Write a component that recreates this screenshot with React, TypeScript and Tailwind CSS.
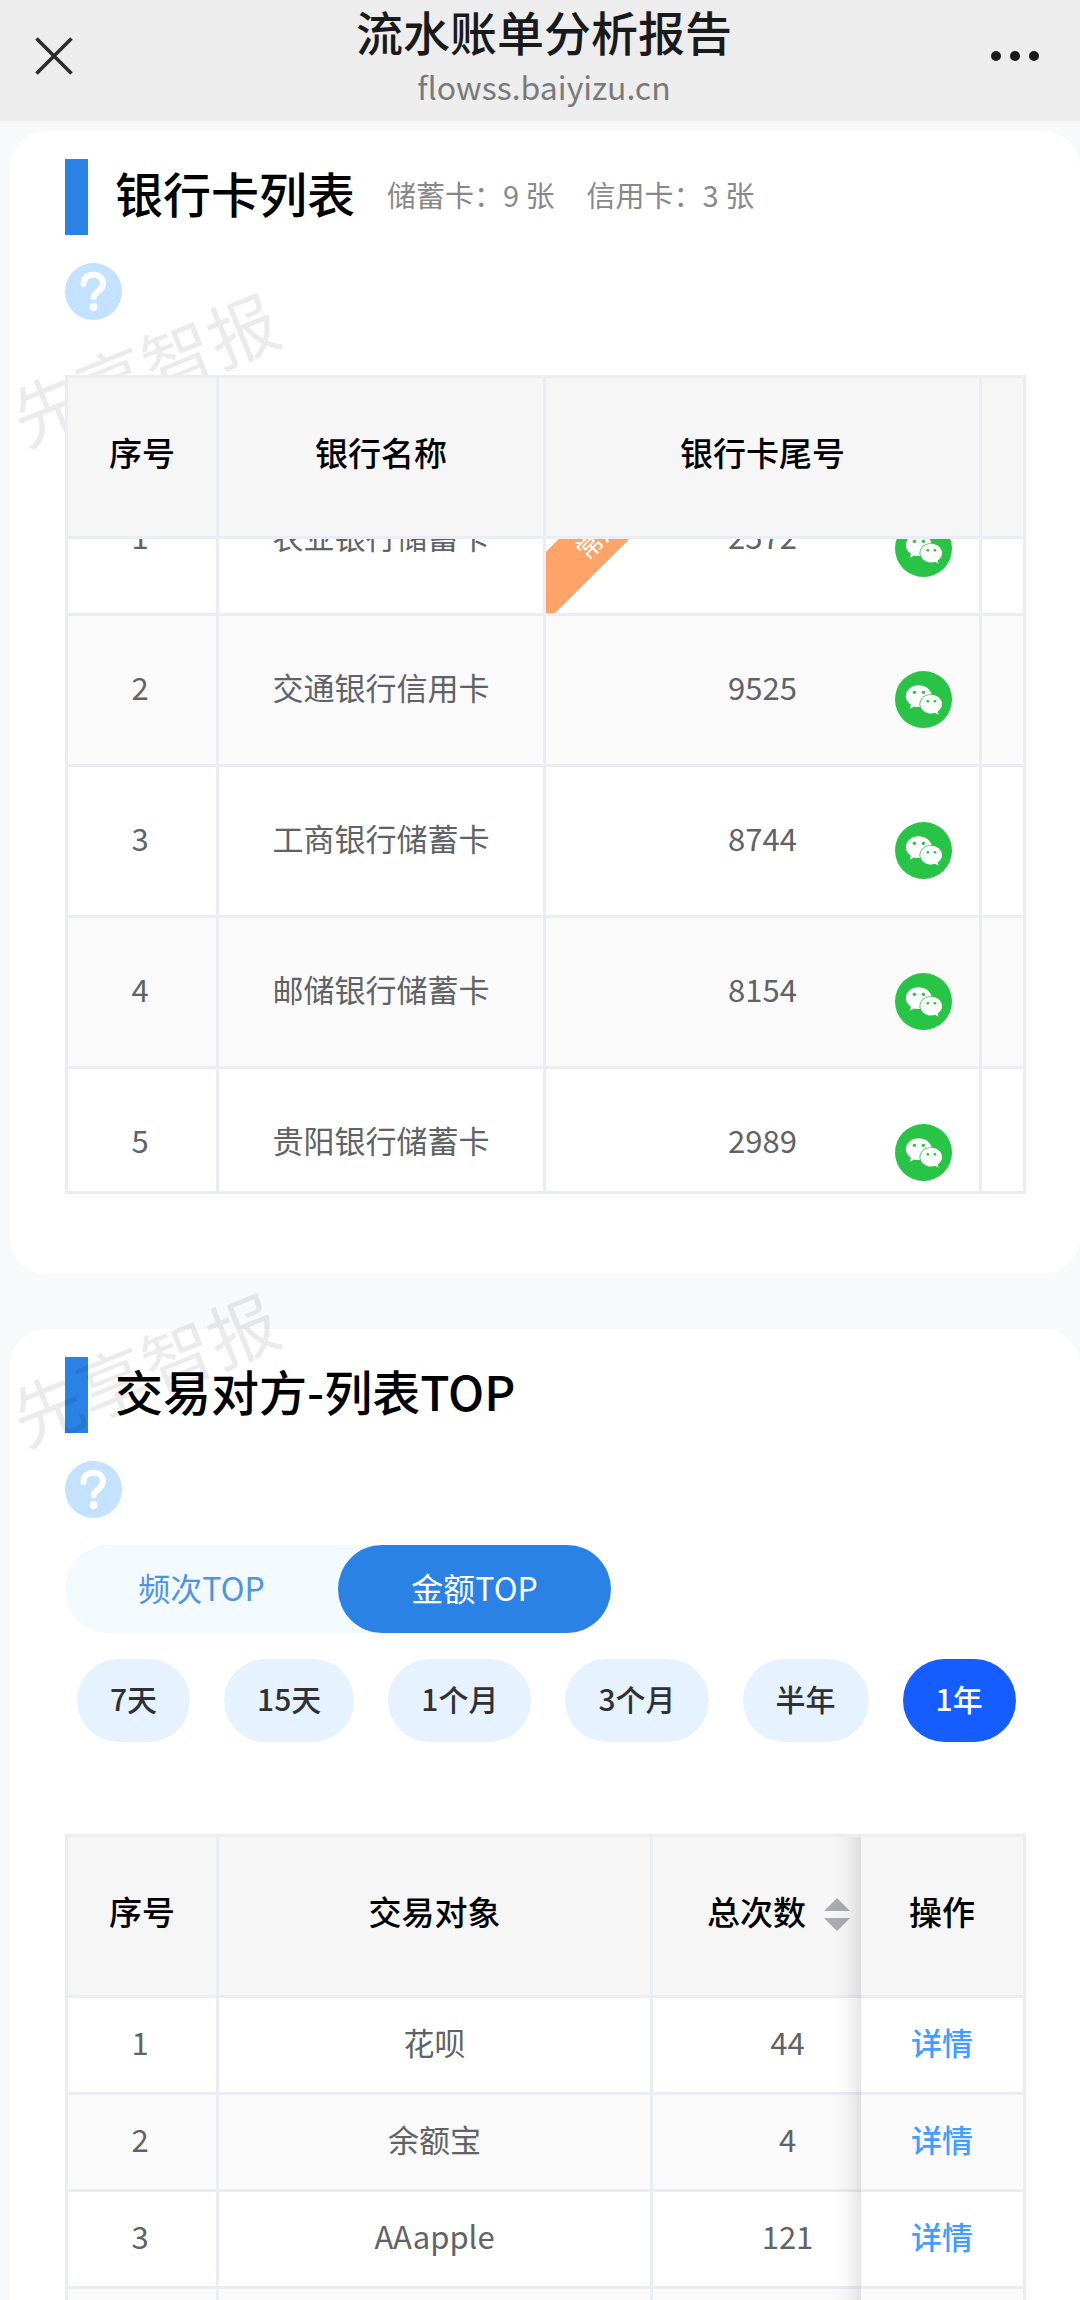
import * as React from "react";
import { FaWeixin } from "react-icons/fa";
import clsx from "clsx";

type BankCard = { name: string; tail: string; common?: boolean };

const bankCards: BankCard[] = [
  { name: "农业银行储蓄卡", tail: "2572", common: true },
  { name: "交通银行信用卡", tail: "9525" },
  { name: "工商银行储蓄卡", tail: "8744" },
  { name: "邮储银行储蓄卡", tail: "8154" },
  { name: "贵阳银行储蓄卡", tail: "2989" },
];

const counterparties = [
  { name: "花呗", count: "44" },
  { name: "余额宝", count: "4" },
  { name: "AAapple", count: "121" },
];

const ranges = ["7天", "15天", "1个月", "3个月", "半年", "1年"];

const th =
  "h-[161px] border-r-[3px] border-b-[3px] border-[#ebedf5] bg-[#f6f6f6] pb-2 text-[33px] font-medium text-black";
const td = "border-r-[3px] border-b-[3px] border-[#ebedf5] pb-1.5 text-center text-[31px] text-[#606266]";
const stickyCol =
  "sticky right-0 before:pointer-events-none before:absolute before:top-0 before:-bottom-[3px] before:-left-7 before:w-7 before:shadow-[inset_-28px_0_28px_-28px_rgba(0,0,0,0.2)]";

function TitleBar() {
  return (
    <header className="flex h-[121px] shrink-0 items-center justify-between bg-[#ededed] pr-[41px] pb-2.5 pl-[35px]">
      <button type="button" aria-label="关闭" className="w-[62px]">
        <svg viewBox="0 0 38 38" className="h-[38px] w-[38px]" fill="none" stroke="#2b2b2b" strokeWidth="3.6">
          <path d="M1.5 1.5 36.5 36.5M36.5 1.5 1.5 36.5" />
        </svg>
      </button>
      <div className="text-center">
        <h1 className="text-[47px] leading-[60px] font-medium text-[#1a1a1a]">流水账单分析报告</h1>
        <p className="text-[32px] leading-[50px] text-[#7a7a7a]">flowss.baiyizu.cn</p>
      </div>
      <button type="button" aria-label="更多" className="flex w-[48px] items-center justify-between">
        <span className="h-2.5 w-2.5 rounded-full bg-[#1a1a1a]" />
        <span className="h-2.5 w-2.5 rounded-full bg-[#1a1a1a]" />
        <span className="h-2.5 w-2.5 rounded-full bg-[#1a1a1a]" />
      </button>
    </header>
  );
}

function SectionTitle({ title, children }: { title: string; children?: React.ReactNode }) {
  return (
    <div className="flex h-[76px] items-center">
      <span className="h-full w-[23px] bg-[#2a82e4]" />
      <h2 className="ml-[27px] pb-2.5 text-[48px] font-medium text-black">{title}</h2>
      {children}
    </div>
  );
}

function HelpButton() {
  return (
    <button type="button" aria-label="说明" className="mt-7 block">
      <svg viewBox="0 0 57 57" className="h-[57px] w-[57px]" fill="none">
        <circle cx="28.5" cy="28.5" r="28.5" fill="#c2e2ff" />
        <path
          d="M18.500 21c0-6 4.200-9.300 9.800-9.300S38 15 38 20.500c0 4-2.200 5.800-4.900 7.800-2.900 2.200-4.300 3.400-4.300 6"
          stroke="#fff"
          strokeWidth="6"
          strokeLinecap="round"
        />
        <circle cx="28.5" cy="44" r="4" fill="#fff" />
      </svg>
    </button>
  );
}

function Watermark({ className }: { className: string }) {
  return (
    <div
      aria-hidden="true"
      className={clsx(
        "pointer-events-none absolute -rotate-[22deg] text-[70px] leading-none whitespace-nowrap text-black/8 select-none",
        className
      )}
    >
      先享智报
    </div>
  );
}

function BankCardTable() {
  const scroller = React.useRef<HTMLDivElement>(null);

  React.useLayoutEffect(() => {
    if (scroller.current) scroller.current.scrollTop = 74;
  }, []);

  return (
    <div
      ref={scroller}
      className="relative z-20 mt-[55px] h-[819px] overflow-auto border-t-[3px] border-b-[3px] border-l-[3px] border-[#ebedf5] bg-white [scrollbar-width:none]"
    >
      <table className="w-full table-fixed border-separate border-spacing-0">
        <colgroup>
          <col className="w-[151px]" />
          <col className="w-[327px]" />
          <col className="w-[436px]" />
          <col />
        </colgroup>
        <thead className="sticky top-0 z-10">
          <tr>
            <th className={th}>序号</th>
            <th className={th}>银行名称</th>
            <th className={th}>银行卡尾号</th>
            <th className={th} />
          </tr>
        </thead>
        <tbody>
          {bankCards.map((card, i) => (
            <tr key={card.tail} className="h-[151px] even:bg-[#fafafa]">
              <td className={clsx(td, "pr-1")}>{i + 1}</td>
              <td className={td}>{card.name}</td>
              <td className={clsx(td, "relative overflow-hidden")}>
                {card.common && (
                  <span className="absolute top-[36px] -left-[59px] w-[240px] -rotate-45 bg-[#ffa469] text-center text-[26px] leading-[50px] text-white">
                    常用卡
                  </span>
                )}
                {card.tail}
                <span className="absolute top-[55px] right-[27px] flex h-[57px] w-[57px] items-center justify-center rounded-full bg-[#28c445]">
                  <FaWeixin className="h-[38px] w-[38px] text-white" />
                </span>
              </td>
              <td className={td} />
            </tr>
          ))}
        </tbody>
      </table>
    </div>
  );
}

function CounterpartyTable() {
  return (
    <div className="relative z-20 mt-[92px] overflow-x-auto border-t-[3px] border-l-[3px] border-[#ebedf5] bg-white [scrollbar-width:none]">
      <table className="w-full min-w-[1022px] table-fixed border-separate border-spacing-0">
        <colgroup>
          <col className="w-[151px]" />
          <col />
          <col className="w-[272px]" />
          <col className="w-[165px]" />
        </colgroup>
        <thead>
          <tr>
            <th className={th}>序号</th>
            <th className={th}>交易对象</th>
            <th className={th}>
              <span className="inline-flex items-center">
                总次数
                <button type="button" aria-label="排序" className="flex w-[62px] justify-center pt-1">
                  <svg viewBox="0 0 26 33" className="h-[33px] w-[26px]" fill="#a8abb2">
                    <path d="M13 0 26 13H0ZM0 20H26L13 33Z" />
                  </svg>
                </button>
              </span>
            </th>
            <th className={clsx(th, stickyCol)}>操作</th>
          </tr>
        </thead>
        <tbody>
          {counterparties.map((row, i) => (
            <tr key={row.name} className="group h-[97px]">
              <td className={clsx(td, "pr-1 group-even:bg-[#fafafa]")}>{i + 1}</td>
              <td className={clsx(td, "group-even:bg-[#fafafa]")}>{row.name}</td>
              <td className={clsx(td, "group-even:bg-[#fafafa]")}>{row.count}</td>
              <td className={clsx(td, stickyCol, "bg-white group-even:bg-[#fafafa]")}>
                <a href="#detail" className="font-medium text-[#409eff]">
                  详情
                </a>
              </td>
            </tr>
          ))}
          <tr className="h-[97px]">
            <td className={clsx(td, "bg-[#fafafa]")} />
            <td className={clsx(td, "bg-[#fafafa]")} />
            <td className={clsx(td, "bg-[#fafafa]")} />
            <td className={clsx(td, stickyCol, "bg-[#fafafa]")} />
          </tr>
        </tbody>
      </table>
    </div>
  );
}

export default function App() {
  const [mode, setMode] = React.useState("金额TOP");
  const [range, setRange] = React.useState("1年");

  return (
    <div className="flex h-screen flex-col overflow-hidden bg-[#f7f9fb] font-['Noto_Sans_CJK_SC',sans-serif]">
      <TitleBar />
      <main className="relative min-h-0 flex-1 overflow-hidden pt-2.5 pl-2.5">
        <Watermark className="top-[211px] left-[4px] z-10" />
        <Watermark className="top-[1211px] left-[4px] z-10" />

        <section className="rounded-[36px] bg-white pt-7 pr-[54px] pb-20 pl-[55px]">
          <SectionTitle title="银行卡列表">
            <p className="ml-8 flex gap-8 pb-1 text-[29px] text-[#888]">
              <span>储蓄卡：9 张</span>
              <span>信用卡：3 张</span>
            </p>
          </SectionTitle>
          <HelpButton />
          <BankCardTable />
        </section>

        <section className="mt-[55px] rounded-[36px] bg-white pt-7 pr-[54px] pb-20 pl-[55px]">
          <SectionTitle title="交易对方-列表TOP" />
          <HelpButton />
          <div className="mt-[27px] inline-flex rounded-full bg-[#f2f9ff]">
            {["频次TOP", "金额TOP"].map((label) => (
              <button
                key={label}
                type="button"
                onClick={() => setMode(label)}
                className={clsx(
                  "h-[88px] w-[273px] rounded-full pb-1 text-[32px]",
                  mode === label ? "bg-[#2a82e4] text-white" : "text-[#4f94e0]"
                )}
              >
                {label}
              </button>
            ))}
          </div>
          <div className="mt-[26px] flex gap-[34px] px-3">
            {ranges.map((label) => (
              <button
                key={label}
                type="button"
                onClick={() => setRange(label)}
                className={clsx(
                  "h-[83px] rounded-full px-[33px] pb-1 text-[30px] font-medium whitespace-nowrap",
                  range === label ? "bg-[#165dff] text-white" : "bg-[#e6f2ff] text-[#303133]"
                )}
              >
                {label}
              </button>
            ))}
          </div>
          <CounterpartyTable />
        </section>
      </main>
    </div>
  );
}
